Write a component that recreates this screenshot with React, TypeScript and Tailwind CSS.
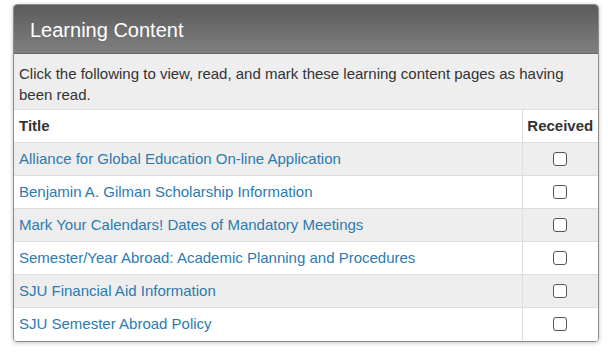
const items = [
  'Alliance for Global Education On-line Application',
  'Benjamin A. Gilman Scholarship Information',
  'Mark Your Calendars! Dates of Mandatory Meetings',
  'Semester/Year Abroad: Academic Planning and Procedures',
  'SJU Financial Aid Information',
  'SJU Semester Abroad Policy',
]

export default function App() {
  return (
    <div className="w-[608px] h-[353px] bg-white pl-[13px] pt-[4px]" style={{ fontFamily: '"Liberation Sans", Arial, sans-serif' }}>
      <div className="w-[586px] rounded-[4px] border border-[#8c8c8c] overflow-hidden shadow-[0_1px_4px_rgba(0,0,0,0.25)]">
        <div className="h-[49px] flex items-center px-[16px] pt-[1px] bg-gradient-to-b from-[#5b5b5b] to-[#808080] border-b border-[#666] text-white text-[20px]">
          Learning Content
        </div>
        <div className="h-[55px] bg-[#eeeeee] px-[5px] pt-[9px] text-[15px] leading-[21px] text-[#333]">
          Click the following to view, read, and mark these learning content pages as having been read.
        </div>
        <table className="w-full border-collapse text-[15px] text-[#333]">
          <thead>
            <tr className="h-[33px] bg-white border-t border-[#dddddd]">
              <th className="text-left font-bold px-[5px]">Title</th>
              <th className="w-[76px] text-center font-bold border-l border-[#dddddd]">Received</th>
            </tr>
          </thead>
          <tbody>
            {items.map((t, i) => (
              <tr key={t} className={`h-[33px] border-t border-[#dddddd] ${i % 2 === 0 ? 'bg-[#eeeeee]' : 'bg-white'}`}>
                <td className="px-[5px] text-[#2b7bb0]">{t}</td>
                <td className="border-l border-[#dddddd]">
                  <div className="flex justify-center">
                    <span className="block w-[14px] h-[14px] rounded-[3px] border border-[#555] bg-white" />
                  </div>
                </td>
              </tr>
            ))}
          </tbody>
        </table>
      </div>
    </div>
  )
}
